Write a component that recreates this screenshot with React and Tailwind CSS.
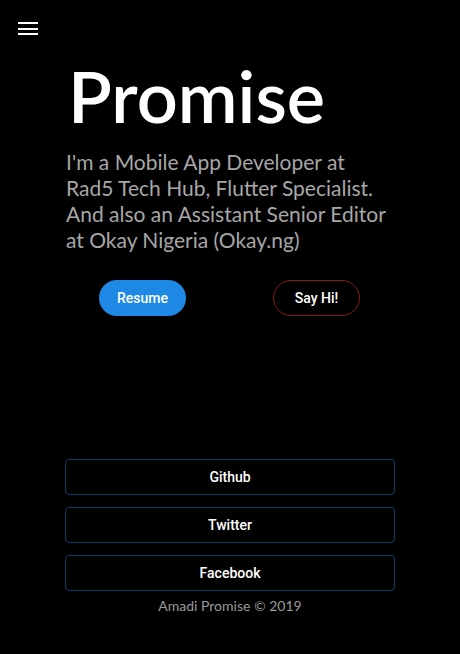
import React from 'react';

const links = ['Github', 'Twitter', 'Facebook'];

export default function App() {
    return (
        <div className="min-h-[654px] bg-black text-white flex flex-col" style={{ fontFamily: 'Lato, "Liberation Sans", sans-serif' }}>
            <div className="pt-[22px] pl-[18px]">
                <button className="flex flex-col gap-[3.5px] w-5">
                    <span className="block h-[2px] w-5 bg-white"></span>
                    <span className="block h-[2px] w-5 bg-white"></span>
                    <span className="block h-[2px] w-5 bg-white"></span>
                </button>
            </div>

            <div className="pl-[66px] pr-[64px]">
                <h1 className="mt-[17px] ml-[2px] text-[72px] leading-[86px] font-semibold">Promise</h1>
                <p className="mt-[11px] text-[21px] leading-[26px] text-[#a7a7a7]">
                    I'm a Mobile App Developer at Rad5 Tech Hub, Flutter Specialist. And also an Assistant Senior Editor at Okay Nigeria (Okay.ng)
                </p>
                <div className="mt-[27px] flex gap-[87px] pl-[33px] font-['Roboto',sans-serif]">
                    <button className="w-[87px] h-9 rounded-full bg-[#1e88e5] text-[14px] font-medium">Resume</button>
                    <button className="w-[87px] h-9 rounded-full border border-[#8b1a1a] text-[14px] font-medium">Say Hi!</button>
                </div>
            </div>

            <div className="mt-auto px-[65px] pb-[38px] flex flex-col gap-3">
                {links.map(l => (
                    <a key={l} className="h-9 rounded-[4px] border border-[#0d3b66] flex items-center justify-center text-[14px] font-medium font-['Roboto',sans-serif]">{l}</a>
                ))}
                <p className="-mt-[7px] leading-5 text-center text-[14px] text-[#9a9a9a]">Amadi Promise © 2019</p>
            </div>
        </div>
    );
}
